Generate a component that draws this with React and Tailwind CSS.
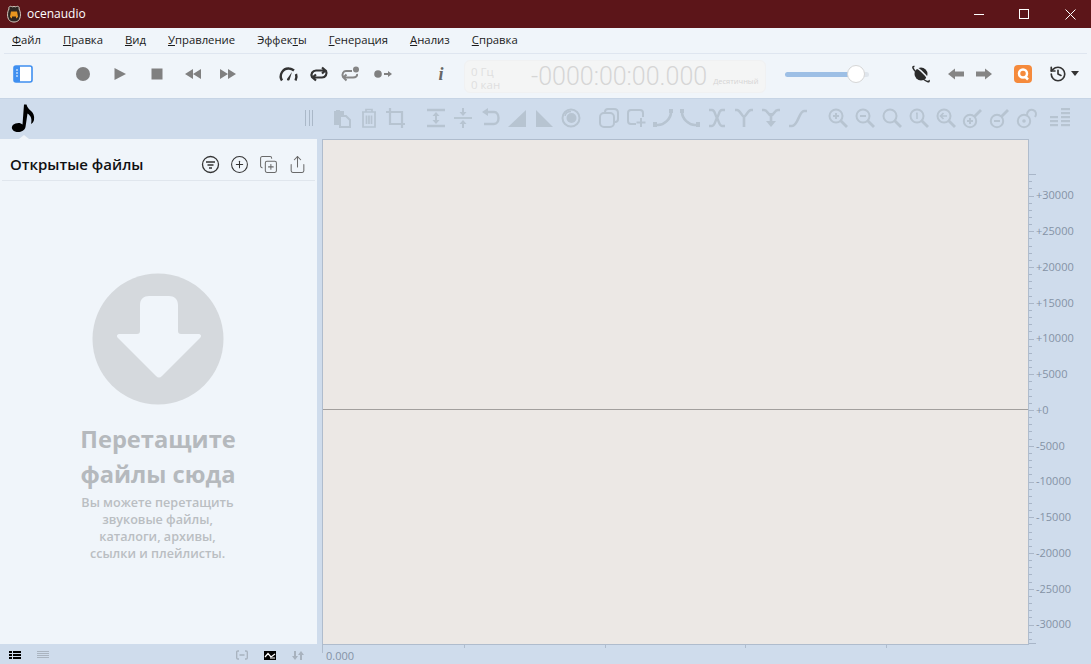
import React from "react";
import { CirclePlus, CopyPlus, History, Share } from "lucide-react";

const menus = [
  { pre: "", key: "Ф", post: "айл", cls: "ml-[8px]" },
  { pre: "", key: "П", post: "равка", cls: "ml-[22px]" },
  { pre: "", key: "В", post: "ид", cls: "ml-[22px]" },
  { pre: "", key: "У", post: "правление", cls: "ml-[22px]" },
  { pre: "Эффек", key: "т", post: "ы", cls: "ml-[22px]" },
  { pre: "", key: "Г", post: "енерация", cls: "ml-[22px]" },
  { pre: "", key: "А", post: "нализ", cls: "ml-[22px]" },
  { pre: "", key: "С", post: "правка", cls: "ml-[22px]" },
];

const scale = [
  "+30000", "+25000", "+20000", "+15000", "+10000", "+5000", "+0",
  "-5000", "-10000", "-15000", "-20000", "-25000", "-30000",
];

const Ico = ({ children, className = "", size = 24, box = 24 }) => (
  <span className={`flex w-6 h-6 shrink-0 items-center justify-center ${className}`}>
    <svg width={size} height={size} viewBox={`0 0 ${box} ${box}`} fill="none">
      {children}
    </svg>
  </span>
);

// disabled edit toolbar icon, 27px slot
const Tool = ({ children, className = "" }) => (
  <span className={`flex w-[27px] shrink-0 items-center justify-center text-[#b7c4d1] ${className}`}>
    <svg width="22" height="22" viewBox="0 0 22 22" fill="none" stroke="currentColor" strokeWidth="2">
      {children}
    </svg>
  </span>
);

const Zoom = ({ children }) => (
  <>
    <circle cx="9" cy="9" r="6.5" />
    <path d="M13.5 13.5L20 20" strokeWidth="2.8" />
    {children}
  </>
);

const Key = ({ children }) => (
  <>
    <circle cx="8" cy="14" r="6.2" />
    <path d="M12.5 9.5L19 3" strokeWidth="2.8" />
    {children}
  </>
);

function Ruler() {
  const ticks = [];
  for (let k = -33; k <= 32; k++) {
    ticks.push({ y: 271 + k * 7.15, len: k === -33 ? 7 : k % 5 === 0 ? 5 : 3 });
  }
  ticks.push({ y: 504, len: 7 });
  return (
    <svg className="absolute left-0 top-0" width="10" height="506">
      {ticks.map((t) => (
        <rect key={t.y} x="0" y={Math.round(t.y)} width={t.len} height="1" fill="#a9b6c8" />
      ))}
    </svg>
  );
}

export default function App() {
  return (
    <div className="flex flex-col h-screen w-full overflow-hidden bg-[#cfdcec] font-['Open_Sans','Noto_Sans',sans-serif]">
      {/* Title bar */}
      <div className="flex h-[28px] shrink-0 items-center bg-[#5c1519] text-white">
        <svg className="ml-[6px]" width="16" height="18" viewBox="0 0 16 18">
          <path d="M3 4C2 1.5 5 0.5 6 2C7 1.4 9 1.4 10 2C11 0.5 14 1.5 13 4C15 7 15 13 12.5 15.5C10 17.5 6 17.5 3.5 15.5C1 13 1 7 3 4Z" fill="#2d2622" stroke="#d8cfc4" strokeWidth="1" />
          <path d="M5 6.5H11L12 11.5C11 14.5 5 14.5 4 11.5Z" fill="#e8961f" />
          <path d="M6 11.5H10V14H6Z" fill="#30231a" />
        </svg>
        <span className="ml-[5px] text-[12px] leading-none">ocenaudio</span>
        <div className="ml-auto flex items-center">
          <span className="mr-[35px] h-px w-[10px] bg-white" />
          <span className="mr-[36px] h-[10px] w-[10px] border border-white" />
          <svg className="mr-[15px]" width="11" height="11" viewBox="0 0 11 11" stroke="#fff" strokeWidth="1">
            <path d="M0.5 0.5L10.5 10.5M10.5 0.5L0.5 10.5" />
          </svg>
        </div>
      </div>

      {/* Top area */}
      <div className="shrink-0 bg-[#f0f5fa] border-b border-[#c6d4e5]">
        <div className="flex h-[26px] items-center mx-[4px] border-b border-[#dfe6f0] text-[11.3px] text-[#1b1b1b]">
          {menus.map((m) => (
            <span key={m.key + m.post} className={m.cls}>
              {m.pre}
              <u>{m.key}</u>
              {m.post}
            </span>
          ))}
        </div>

        <div className="flex h-[44px] items-center pb-[4px]">
          <Ico className="ml-[11px]" size={20} box={20}>
            <rect x="1" y="2" width="18" height="16" rx="2" fill="#fff" stroke="#3f8ff0" strokeWidth="1.6" />
            <rect x="1" y="2" width="6" height="16" fill="#3f8ff0" />
            <path d="M3 6h2M3 9h2M3 12h2" stroke="#fff" strokeWidth="1" />
          </Ico>
          <Ico className="ml-[36px]"><circle cx="12" cy="12" r="7" fill="#808080" /></Ico>
          <Ico className="ml-[13px]"><path d="M6.5 6L18 12L6.5 18Z" fill="#808080" /></Ico>
          <Ico className="ml-[13px]"><rect x="6.5" y="6.5" width="11" height="11" fill="#808080" /></Ico>
          <Ico className="ml-[12px]"><path d="M12 7V17L4 12ZM20 7V17L12 12Z" fill="#808080" /></Ico>
          <Ico className="ml-[11px]"><path d="M4 7V17L12 12ZM12 7V17L20 12Z" fill="#808080" /></Ico>
          <Ico className="ml-[36px]">
            <path d="M6 18.5C2.5 13 7 6 13 6.5C15 6.6 16.5 7.3 18 8.5" stroke="#333" strokeWidth="2.4" />
            <path d="M20 12C21 14.5 20.5 16.5 19.5 18.5" stroke="#333" strokeWidth="2.4" />
            <path d="M11 17L16 10L13.5 18C12.5 19 10.5 18.5 11 17Z" fill="#333" />
          </Ico>
          <Ico className="ml-[7px]">
            <path d="M5 15C3.5 12 5.5 8.5 9 8.5H18M15 5.5L18.5 8.5L15 11.5" stroke="#333" strokeWidth="2.2" />
            <path d="M19 9C20.5 12 18.5 15.5 15 15.5H6M9 12.5L5.5 15.5L9 18.5" stroke="#333" strokeWidth="2.2" />
          </Ico>
          <Ico className="ml-[7px]">
            <path d="M5 15C3.5 12 5.5 9 8 9H14M8.5 12.5L5.5 15.5L8.5 18.5" stroke="#858585" strokeWidth="2" />
            <path d="M19 12C19.5 14 18 15.5 15 15.5H6" stroke="#858585" strokeWidth="2" />
            <circle cx="18" cy="7.5" r="3" fill="#858585" />
          </Ico>
          <Ico className="ml-[9px]">
            <circle cx="7" cy="12" r="3.8" fill="#808080" />
            <path d="M13 12H18" stroke="#808080" strokeWidth="2" />
            <path d="M17 9L21 12L17 15Z" fill="#808080" />
          </Ico>
          <span className="ml-[34px] flex w-6 justify-center font-['Liberation_Serif',serif] text-[18px] font-bold italic leading-none text-[#666]">
            i
          </span>

          {/* Time display */}
          <div className="ml-[11px] mt-[4px] flex h-[33px] w-[302px] shrink-0 items-center rounded-[6px] border border-[#f0f1f2] bg-[#f4f5f5]">
            <div className="ml-[6px] flex w-[48px] flex-col pt-[4px] text-[11.5px] leading-[13px] text-[#dfdfdf]">
              <span>0 Гц</span>
              <span>0 кан</span>
            </div>
            <span className="ml-[12px] font-['Roboto',sans-serif] text-[25px] font-light leading-none text-[#d6d6d6]">
              -0000:00:00.000
            </span>
            <span className="ml-[6px] mt-[12px] text-[7.5px] leading-none text-[#d4d4d4]">Десятичный</span>
          </div>

          {/* Volume slider */}
          <div className="relative ml-[19px] flex h-6 w-[84px] shrink-0 items-center">
            <div className="h-[5px] w-[72px] rounded-l-full bg-[#9dbfe5]" />
            <div className="h-[5px] w-[12px] rounded-r-full bg-[#dfe5ec]" />
            <div className="absolute left-[62px] top-[3px] h-[18px] w-[18px] rounded-full border border-[#d6d6d6] bg-white" />
          </div>

          <Ico className="ml-[40px]">
            <circle cx="12" cy="12" r="6.5" fill="#2b2b2b" />
            <path d="M4 5C8 4.5 16 11 20.5 19" stroke="#f0f5fa" strokeWidth="1.5" />
            <path d="M5.5 4.5C2 4 5 8 7 10M14 17C17 19 21 21.5 20 18" stroke="#2b2b2b" strokeWidth="1.5" />
          </Ico>
          <Ico className="ml-[11px]"><path d="M4 12L11 6.5V9.5H20V14.5H11V17.5Z" fill="#858585" /></Ico>
          <Ico className="ml-[4px]"><path d="M20 12L13 6.5V9.5H4V14.5H13V17.5Z" fill="#858585" /></Ico>
          <span className="ml-[15px] flex w-6 justify-center">
            <span className="flex h-[18px] w-[18px] items-center justify-center rounded-[4px] bg-[#f58a3c]">
              <svg width="14" height="14" viewBox="0 0 14 14" fill="none" stroke="#fff" strokeWidth="2.5">
                <circle cx="7" cy="6.5" r="4" />
                <path d="M9 9.5L12 12.5" />
              </svg>
            </span>
          </span>
          <span className="ml-[11px] flex w-6 justify-center text-[#333]">
            <History size={18} strokeWidth={2.2} />
          </span>
          <svg width="10" height="6" viewBox="0 0 10 6" className="shrink-0">
            <path d="M1 0H9L5 5Z" fill="#333" />
          </svg>
        </div>
      </div>

      {/* Edit toolbar */}
      <div className="relative flex h-[40px] shrink-0 items-center pb-[2px]">
        <span className="flex w-[44px] shrink-0 justify-center">
          <svg width="28" height="30" viewBox="0 0 28 30" className="mr-[-1px]">
            <path d="M17.5 1.5C19 8 26.5 8 25 17C24.5 19 23.5 20 22 21C23 17 22.5 13 18.5 10.5L16.5 24C15.5 28.5 10 30 6 28.5C1.5 26.5 2 22 6.5 20.5C9.5 19.5 12 20 13.5 21.5L15 1.5Z" fill="#000" />
          </svg>
        </span>
        <span className="absolute bottom-0 left-[19px] h-0 w-0 border-x-[5px] border-b-[4px] border-x-transparent border-b-[#f0f5fa]" />
        <svg width="10" height="16" viewBox="0 0 10 16" stroke="#aab8c8" strokeWidth="1" className="ml-[260px] shrink-0">
          <path d="M1.5 0V16M5.5 0V16M8.5 0V16" />
        </svg>
        <Tool className="ml-[14px]">
          <path d="M12 4H9V3H5V4H3V17H8" fill="currentColor" stroke="none" />
          <path d="M3 4H13V8H3ZM3 8H8V18H3Z" fill="currentColor" stroke="none" />
          <path d="M9 9H15L19 13V20H9Z" fill="#cfdcec" />
        </Tool>
        <Tool>
          <path d="M4 5H18M8 5V2.5H14V5M5 5.5V20H17V5.5M8.5 8.5V17M11 8.5V17M13.5 8.5V17" strokeWidth="1.7" />
        </Tool>
        <Tool>
          <path d="M5 1V17H20M1 5H17V21" strokeWidth="2.2" />
        </Tool>
        <Tool className="ml-[13px]">
          <path d="M2 3H20M2 19H20" strokeWidth="2.5" />
          <path d="M11 5L14.5 9H7.5ZM11 17L14.5 13H7.5Z" fill="currentColor" stroke="none" />
          <path d="M11 8V14" />
        </Tool>
        <Tool>
          <path d="M2 11H20" strokeWidth="1.8" />
          <path d="M11 9L14.5 5H7.5ZM11 13L14.5 17H7.5Z" fill="currentColor" stroke="none" />
          <path d="M11 1V6M11 16V21" />
        </Tool>
        <Tool>
          <path d="M8 5H15C21 5 21 17 15 17H5" strokeWidth="2.4" />
          <path d="M9 1L3 5L9 9Z" fill="currentColor" stroke="none" />
        </Tool>
        <Tool>
          <path d="M2 20L20 3V20Z" fill="currentColor" stroke="none" />
        </Tool>
        <Tool>
          <path d="M3 3L20 20H3Z" fill="currentColor" stroke="none" />
        </Tool>
        <Tool>
          <circle cx="11" cy="11" r="8.5" strokeWidth="2" />
          <circle cx="11.5" cy="11" r="5" fill="currentColor" stroke="none" />
          <path d="M5 9C5.5 6 8 4.5 11 4.5" strokeWidth="1.5" />
        </Tool>
        <Tool className="ml-[11px]">
          <rect x="2" y="6" width="14" height="14" rx="4" />
          <path d="M7 5C7 3 8 2 10 2H16C18.5 2 20 3.5 20 6V12C20 14 19 15 17 15" />
        </Tool>
        <Tool>
          <path d="M18 10V6C18 4 17 3 15 3H6C4 3 3 4 3 6V14C3 16 4 17 6 17H11" />
          <path d="M16 11V20M11.5 15.5H20.5" />
        </Tool>
        <Tool>
          <path d="M19 3V5C19 12 12 18 6 18H3" strokeWidth="2.6" />
          <rect x="1" y="15" width="4" height="5" fill="currentColor" stroke="none" />
          <rect x="17" y="2" width="4" height="4" fill="currentColor" stroke="none" />
        </Tool>
        <Tool>
          <path d="M3 3V5C3 12 10 18 16 18H19" strokeWidth="2.6" />
          <rect x="17" y="15" width="4" height="5" fill="currentColor" stroke="none" />
          <rect x="1" y="2" width="4" height="4" fill="currentColor" stroke="none" />
        </Tool>
        <Tool>
          <path d="M3 3H6C9 3 9 8 11 11C13 14 13 19 16 19H19M19 3H16C13 3 13 8 11 11C9 14 9 19 6 19H3" strokeWidth="2.4" />
        </Tool>
        <Tool>
          <path d="M2 3H4C7 3 8 8 11 10C14 8 15 3 18 3H20M11 10V20" strokeWidth="2.6" />
        </Tool>
        <Tool>
          <path d="M2 3H4C7 3 8 7 11 9C14 7 15 3 18 3H20M11 6V14" strokeWidth="2.6" />
          <path d="M6 14H16L11 20Z" fill="currentColor" stroke="none" />
        </Tool>
        <Tool>
          <path d="M2 19H5C11 19 12 4 17 4H20" strokeWidth="2.6" />
        </Tool>
        <Tool className="ml-[13px]"><Zoom><path d="M6 9H12M9 6V12" /></Zoom></Tool>
        <Tool><Zoom><path d="M6 9H12" /></Zoom></Tool>
        <Tool><Zoom /></Tool>
        <Tool><Zoom><path d="M9 5.5V12M8 6.5H9.5" strokeWidth="1.5" /></Zoom></Tool>
        <Tool><Zoom><path d="M6 9H12M8.5 6L5.5 9L8.5 12" strokeWidth="1.7" /></Zoom></Tool>
        <Tool><Key><path d="M5 14H11M8 11V17" /></Key></Tool>
        <Tool><Key><path d="M5 14H11" /></Key></Tool>
        <Tool>
          <circle cx="8" cy="14" r="6.2" />
          <circle cx="8" cy="14" r="1.8" fill="currentColor" stroke="none" />
          <path d="M11 8C11 4 14 2 17 3C20 4 21 7 19 10" />
        </Tool>
        <span className="ml-[6px] flex w-[27px] justify-center">
          <svg width="22" height="20" viewBox="0 0 22 20" fill="#b7c4d1">
            <rect x="1" y="8" width="8" height="2.2" />
            <rect x="1" y="12" width="8" height="2.2" />
            <rect x="1" y="16" width="8" height="2.2" />
            <rect x="12" y="0" width="9" height="2.2" />
            <rect x="12" y="4" width="9" height="2.2" />
            <rect x="12" y="8" width="9" height="2.2" />
            <rect x="12" y="12" width="9" height="2.2" />
            <rect x="12" y="16" width="9" height="2.2" />
          </svg>
        </span>
      </div>

      {/* Main */}
      <div className="flex min-h-0 flex-1">
        {/* Open files panel */}
        <aside className="mb-px flex w-[317px] shrink-0 flex-col bg-[#f0f5fa]">
          <div className="mx-[2px] flex h-[42px] shrink-0 items-center border-b border-[#e0e6ed] pl-[8px] pt-[10px]">
            <h2 className="text-[15px] font-semibold leading-none text-[#111]">Открытые файлы</h2>
            <div className="ml-auto mr-[8px] flex items-center gap-[10px] text-[#333]">
              <svg width="19" height="19" viewBox="0 0 19 19" fill="none" stroke="currentColor" strokeWidth="1.3">
                <circle cx="9.5" cy="9.5" r="8" />
                <path d="M5 7H14M6.5 10H12.5M8 13H11" />
              </svg>
              <CirclePlus size={19} strokeWidth={1.3} />
              <CopyPlus size={19} strokeWidth={1.3} className="text-[#6a6a6a]" />
              <Share size={19} strokeWidth={1.3} className="text-[#6a6a6a]" />
            </div>
          </div>

          <div className="flex flex-col items-center pt-[92px]">
            <svg width="132" height="132" viewBox="0 0 132 132" className="mr-px">
              <circle cx="66" cy="66" r="65.5" fill="#d5d9dd" />
              <path
                d="M48 32C48 26 52 23 57 23H77C82 23 86 26 86 32V58C86 60 87 61 89 61H106C109 61 110 63 108 65L70 103C68 105 66 105 64 103L26 65C24 63 25 61 28 61H45C47 61 48 60 48 58Z"
                fill="#f0f5fa"
              />
            </svg>
            <p className="mt-[17px] mr-px text-center text-[23.7px] font-bold leading-[35px] text-[#b5b9bd]">
              Перетащите
              <br />
              файлы сюда
            </p>
            <p className="mt-[2px] mr-[2px] text-center text-[12.6px] font-semibold leading-[17px] text-[#babec2]">
              Вы можете перетащить
              <br />
              звуковые файлы,
              <br />
              каталоги, архивы,
              <br />
              ссылки и плейлисты.
            </p>
          </div>
        </aside>

        {/* Waveform */}
        <div className="relative ml-[5px] flex-1 border border-[#afbccd] bg-[#ece8e5]">
          <div className="absolute inset-x-0 top-[269px] h-px bg-[#a29f9d]" />
          {/* time ticks */}
          <span className="absolute -bottom-[9px] -left-px h-[8px] w-px bg-[#afbccd]" />
          <span className="absolute -bottom-[4px] left-[141px] h-[3px] w-px bg-[#afbccd]" />
          <span className="absolute -bottom-[4px] left-[282px] h-[3px] w-px bg-[#afbccd]" />
          <span className="absolute -bottom-[4px] left-[422px] h-[3px] w-px bg-[#afbccd]" />
          <span className="absolute -bottom-[4px] left-[563px] h-[3px] w-px bg-[#afbccd]" />
        </div>

        {/* Amplitude ruler */}
        <div className="relative w-[62px] shrink-0 pl-[7px] pt-[38px] text-[11px] text-[#8593a6]">
          <Ruler />
          {scale.map((s) => (
            <div key={s} className="flex h-[35.75px] items-center leading-none">
              {s}
            </div>
          ))}
        </div>
      </div>

      {/* Status bar */}
      <div className="flex h-[19px] shrink-0 items-center pt-px">
        <svg width="12" height="8" viewBox="0 0 12 8" className="ml-[9px] shrink-0" fill="#000">
          <path d="M0 0H3V2H0ZM4 0H12V2H4ZM0 3H3V5H0ZM4 3H12V5H4ZM0 6H3V8H0ZM4 6H12V8H4Z" />
        </svg>
        <svg width="12" height="8" viewBox="0 0 12 8" className="ml-[16px] shrink-0" fill="#aab4c0">
          <path d="M0 0H12V1H0ZM0 2H12V3H0ZM0 4H12V5H0ZM0 6H12V7H0Z" />
        </svg>
        <svg width="12" height="10" viewBox="0 0 12 10" className="ml-[187px] shrink-0" fill="none" stroke="#a8b2be" strokeWidth="1.3">
          <path d="M3 1H2C1 1 .7 1.5 .7 2V8C.7 8.5 1 9 2 9H3M9 1H10C11 1 11.3 1.5 11.3 2V8C11.3 8.5 11 9 10 9H9M3.5 5H8.5" />
        </svg>
        <svg width="12" height="9" viewBox="0 0 12 9" className="ml-[16px] shrink-0">
          <rect width="12" height="9" fill="#000" />
          <path d="M1 6L4 2.5L7 6L11 3" fill="none" stroke="#fff" strokeWidth="1.2" />
          <path d="M6 7H11" stroke="#fff" strokeWidth="1" />
        </svg>
        <svg width="12" height="9" viewBox="0 0 12 9" className="ml-[16px] shrink-0" fill="#a8b2be">
          <path d="M2 0H4V5H6L3 9L0 5H2ZM8 9H10V4H12L9 0L6 4H8Z" />
        </svg>
        <span className="ml-[22px] pt-px text-[11px] leading-none text-[#8593a6]">0.000</span>
      </div>
    </div>
  );
}
